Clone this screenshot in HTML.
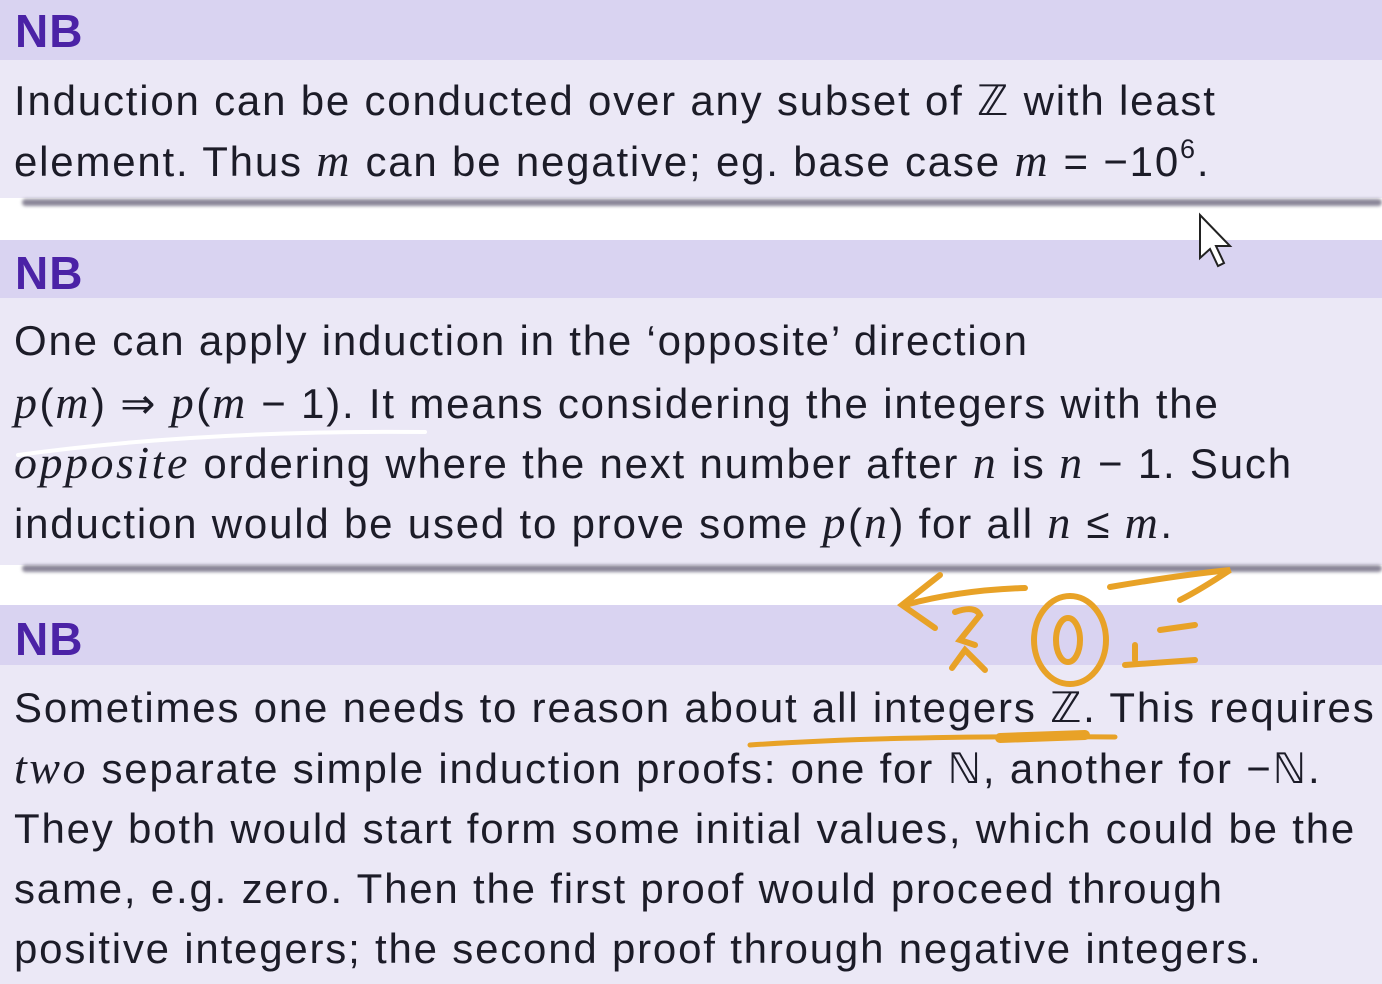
<!DOCTYPE html>
<html><head><meta charset="utf-8"><style>
body{margin:0;width:1382px;height:984px;overflow:hidden;background:#fff;font-family:"Liberation Sans",sans-serif;color:#1c1c28;position:relative}
.h{position:absolute;left:0;width:1382px;background:#d9d3f1}
.b{position:absolute;left:0;width:1382px;background:#ebe8f6}
.nb{position:absolute;left:15px;font-weight:bold;color:#4b22a6;font-size:46px;letter-spacing:1px}
.sh{position:absolute;left:22px;width:1360px;height:7px;background:#8a8698;border-radius:4px;filter:blur(1.5px)}
.l{position:absolute;left:14px;font-size:42px;letter-spacing:1.8px;white-space:nowrap;line-height:42px}
i{font-family:"Liberation Serif",serif;font-size:46px;letter-spacing:2.5px}
sup{font-size:27px;line-height:0;vertical-align:0;position:relative;top:-18px}
</style></head><body>
<div class="b" style="top:0;height:198px"></div>
<div class="h" style="top:0;height:60px"></div>
<div class="nb" style="top:4px">NB</div>
<div class="l" style="top:80px">Induction can be conducted over any subset of ℤ with least</div>
<div class="l" style="top:140px">element. Thus <i>m</i> can be negative; eg. base case <i>m</i> = −10<sup>6</sup>.</div>
<div class="sh" style="top:199px"></div>

<div class="b" style="top:240px;height:325px"></div>
<div class="h" style="top:240px;height:58px"></div>
<div class="nb" style="top:246px">NB</div>
<div class="l" style="top:320px">One can apply induction in the ‘opposite’ direction</div>
<div class="l" style="top:382px"><i>p</i>(<i>m</i>) ⇒ <i>p</i>(<i>m</i> − 1). It means considering the integers with the</div>
<div class="l" style="top:442px"><i>opposite</i> ordering where the next number after <i>n</i> is <i>n</i> − 1. Such</div>
<div class="l" style="top:502px">induction would be used to prove some <i>p</i>(<i>n</i>) for all <i>n</i> ≤ <i>m</i>.</div>
<div class="sh" style="top:565px"></div>

<div class="b" style="top:605px;height:379px"></div>
<div class="h" style="top:605px;height:60px"></div>
<div class="nb" style="top:612px">NB</div>
<div class="l" style="top:687px">Sometimes one needs to reason about all integers ℤ. This requires</div>
<div class="l" style="top:747px"><i>two</i> separate simple induction proofs: one for ℕ, another for −ℕ.</div>
<div class="l" style="top:808px">They both would start form some initial values, which could be the</div>
<div class="l" style="top:868px">same, e.g. zero. Then the first proof would proceed through</div>
<div class="l" style="top:928px">positive integers; the second proof through negative integers.</div>

<svg style="position:absolute;left:0;top:0" width="1382" height="984" fill="none" stroke-linecap="round">
<path d="M18 455 Q200 430 425 432" stroke="#fff" stroke-width="4"/>
<g stroke="#e8a227" stroke-width="6">
<path d="M1025 588 Q960 590 905 605 M940 575 L902 605 L935 628"/>
<path d="M955 612 Q975 605 980 615 Q968 630 960 640 L975 645 M952 668 L965 650 L985 670"/>
<ellipse cx="1070" cy="640" rx="36" ry="44"/>
<ellipse cx="1068" cy="640" rx="12" ry="22"/>
<path d="M1110 587 Q1180 575 1230 570 Q1200 590 1180 600 M1135 645 L1135 660 M1160 630 L1195 625 M1125 665 L1195 660"/>
<path d="M750 745 Q900 735 1115 737" stroke-width="5"/>
<path d="M1000 738 L1085 735" stroke-width="10"/>
</g>
<path d="M1200 215 L1200 258 L1210 249 L1218 266 L1224 263 L1216 246 L1230 246 Z" fill="#fff" stroke="#222" stroke-width="2"/>
</svg>
</body></html>
